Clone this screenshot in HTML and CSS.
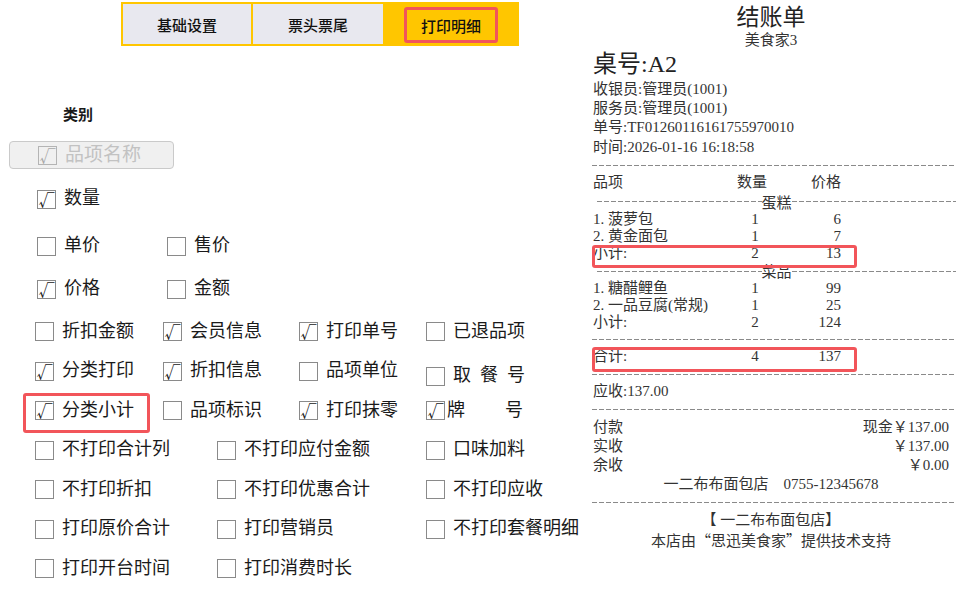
FILE: index.html
```html
<!DOCTYPE html>
<html lang="zh-CN">
<head>
<meta charset="UTF-8" />
<title>打印明细</title>
<link rel="stylesheet" href="styles.css">
</head>
<body>

<div class="page">
  <div class="settings">
    <div class="tabs">
      <div class="tab tab-1">基础设置</div>
      <div class="tab tab-2">票头票尾</div>
      <div class="tab tab-active"><span class="tab-mark">打印明细</span></div>
    </div>

    <div class="cat-title">类别</div>

    <div class="name-btn">
      <span class="cb on">√</span>
      <span>品项名称</span>
    </div>

    <div class="row row-a">
      <label class="opt"><span class="cb on">√</span>数量</label>
    </div>
    <div class="row row-b">
      <label class="opt"><span class="cb"></span>单价</label>
      <label class="opt"><span class="cb"></span>售价</label>
    </div>
    <div class="row row-c">
      <label class="opt"><span class="cb on">√</span>价格</label>
      <label class="opt"><span class="cb"></span>金额</label>
    </div>

    <div class="grid grid-4">
      <label class="opt"><span class="cb"></span>折扣金额</label>
      <label class="opt"><span class="cb on">√</span>会员信息</label>
      <label class="opt"><span class="cb on">√</span>打印单号</label>
      <label class="opt"><span class="cb"></span>已退品项</label>

      <label class="opt"><span class="cb on">√</span>分类打印</label>
      <label class="opt"><span class="cb on">√</span>折扣信息</label>
      <label class="opt"><span class="cb"></span>品项单位</label>
      <label class="opt opt-low"><span class="cb"></span>取&ensp;餐&ensp;号</label>

      <label class="opt opt-mark"><span class="cb on">√</span>分类小计</label>
      <label class="opt"><span class="cb"></span>品项标识</label>
      <label class="opt"><span class="cb on">√</span>打印抹零</label>
      <label class="opt opt-tight"><span class="cb on">√</span>牌&emsp;&emsp;&nbsp;号</label>
    </div>

    <div class="grid grid-3">
      <label class="opt"><span class="cb"></span>不打印合计列</label>
      <label class="opt"><span class="cb"></span>不打印应付金额</label>
      <label class="opt"><span class="cb"></span>口味加料</label>

      <label class="opt"><span class="cb"></span>不打印折扣</label>
      <label class="opt"><span class="cb"></span>不打印优惠合计</label>
      <label class="opt"><span class="cb"></span>不打印应收</label>

      <label class="opt"><span class="cb"></span>打印原价合计</label>
      <label class="opt"><span class="cb"></span>打印营销员</label>
      <label class="opt"><span class="cb"></span>不打印套餐明细</label>

      <label class="opt"><span class="cb"></span>打印开台时间</label>
      <label class="opt"><span class="cb"></span>打印消费时长</label>
    </div>
  </div>

  <div class="receipt">
    <div class="r-title">结账单</div>
    <div class="r-sub">美食家3</div>
    <div class="r-table">桌号:A2</div>
    <div class="r-info">收银员:管理员(1001)</div>
    <div class="r-info">服务员:管理员(1001)</div>
    <div class="r-info">单号:TF01260116161755970010</div>
    <div class="r-info">时间:2026-01-16 16:18:58</div>
    <div class="dash h16"></div>

    <div class="r-grid r-head"><span>品项</span><span>数量</span><span>价格</span></div>
    <div class="r-sect h19"><span>蛋糕</span></div>
    <div class="r-grid"><span>1. 菠萝包</span><span>1</span><span>6</span></div>
    <div class="r-grid"><span>2. 黄金面包</span><span>1</span><span>7</span></div>
    <div class="r-grid r-mark"><span>小计:</span><span>2</span><span>13</span></div>
    <div class="r-sect h18"><span>菜品</span></div>
    <div class="r-grid"><span>1. 糖醋鲤鱼</span><span>1</span><span>99</span></div>
    <div class="r-grid"><span>2. 一品豆腐(常规)</span><span>1</span><span>25</span></div>
    <div class="r-grid"><span>小计:</span><span>2</span><span>124</span></div>
    <div class="dash h16"></div>
    <div class="r-grid r-total r-mark"><span>合计:</span><span>4</span><span>137</span></div>
    <div class="dash h16"></div>
    <div class="r-line">应收:137.00</div>
    <div class="dash h17"></div>

    <div class="r-line r-pay"><span>付款</span><span>现金￥137.00</span></div>
    <div class="r-line r-pay"><span>实收</span><span>￥137.00</span></div>
    <div class="r-line r-pay"><span>余收</span><span>￥0.00</span></div>
    <div class="r-line r-center">一二布布面包店　0755-12345678</div>
    <div class="dash h17"></div>
    <div class="r-line r-center">【 一二布布面包店】</div>
    <div class="r-line r-center r-cjk">本店由“思迅美食家”提供技术支持</div>
  </div>
</div>

</body>
</html>
```

FILE: styles.css
```css
* {
  box-sizing: border-box;
}

body {
  margin: 0;
  background: #fff;
  color: #1a1a1a;
  font-family: "Noto Sans CJK SC", sans-serif;
}

.page {
  display: flex;
  width: 964px;
  height: 600px;
  overflow: hidden;
}

.settings {
  width: 592px;
  flex: none;
}

/* tabs */
.tabs {
  display: flex;
  gap: 2px;
  width: 398px;
  height: 44px;
  margin: 2px 0 0 121px;
  padding: 2px;
  background: #ffc600;
}

.tab {
  display: flex;
  align-items: center;
  justify-content: center;
  font-size: 15px;
  font-weight: 500;
  color: #111;
  background: #e8e8ef;
}

.tab-1 {
  width: 128px;
}

.tab-2 {
  width: 130px;
}

.tab-active {
  flex: 1;
  background: #ffc600;
}

.tab-mark {
  display: flex;
  align-items: center;
  justify-content: center;
  width: 94px;
  height: 36px;
  margin-top: 2px;
  border: 3px solid #f2555a;
  border-radius: 3px;
}

.cat-title {
  height: 36px;
  margin-top: 50px;
  padding-left: 63px;
  line-height: 36px;
  font-size: 15px;
  font-weight: 700;
}

.name-btn {
  display: flex;
  align-items: center;
  gap: 8px;
  width: 165px;
  height: 28px;
  margin: 9px 0 0 9px;
  padding: 0 0 6px 28px;
  border: 1px solid #cacaca;
  border-radius: 4px;
  background: #f0f0f0;
  color: #c2c2c2;
  font-size: 19px;
}

.name-btn .cb {
  border-color: #b4b4b4;
  color: #a8a8a8;
  background: transparent;
}

/* checkbox options */
.cb {
  display: flex;
  align-items: flex-end;
  justify-content: center;
  flex: none;
  width: 19px;
  height: 19px;
  margin-top: 6px;
  border: 1px solid #8a8a8a;
  background: #fff;
  color: #222;
  font-size: 16px;
  line-height: 17px;
}

.opt {
  display: flex;
  align-items: center;
  gap: 8px;
  font-size: 18px;
  color: #1a1a1a;
  white-space: nowrap;
}

.row {
  display: grid;
  grid-template-columns: 130px auto;
  align-items: center;
  height: 40px;
  padding-left: 37px;
}

.row-a {
  margin-top: 7px;
}

.row-b {
  margin-top: 7px;
}

.row-c {
  margin-top: 3px;
}

.grid {
  display: grid;
  grid-auto-rows: 39.5px;
  padding-left: 35px;
}

.grid-4 {
  margin-top: 3px;
  grid-template-columns: 128px 136px 127px auto;
}

.grid-3 {
  grid-template-columns: 182px 209px auto;
}

.opt-low {
  padding-top: 10px;
}

.opt-tight {
  gap: 2px;
}

.opt-mark {
  position: relative;
}

.opt-mark::after {
  content: "";
  position: absolute;
  left: -12px;
  top: 5px;
  width: 121px;
  height: 34px;
  border: 3px solid #f2555a;
  border-radius: 3px;
}

/* receipt */
.receipt {
  width: 364px;
  flex: none;
  padding: 0 7px 0 1px;
  font-family: "Liberation Serif", "Noto Sans CJK SC", serif;
  font-size: 15px;
  color: #333;
}

.r-title {
  height: 30px;
  padding-top: 1px;
  line-height: 29px;
  text-align: center;
  font-family: "Noto Sans CJK SC", sans-serif;
  font-size: 23px;
  color: #222;
}

.r-sub {
  height: 20px;
  line-height: 20px;
  text-align: center;
}

.r-table {
  height: 29.5px;
  line-height: 29.5px;
  font-size: 24px;
  color: #222;
}

.r-info {
  height: 19.4px;
  line-height: 19.4px;
}

.dash {
  margin: 0 -7px 0 -1px;
  background: repeating-linear-gradient(90deg, #8a8a8a 0 5px, transparent 5px 7px) center / 100% 1px no-repeat;
}

.h16 {
  height: 16px;
}

.h17 {
  height: 17px;
}

.h18 {
  height: 18px;
}

.h19 {
  height: 19px;
}

.r-sect {
  display: flex;
  align-items: center;
  margin: 0 -7px 0 -1px;
  padding-left: 5px;
}

.r-sect::before,
.r-sect::after {
  content: "";
  flex: 1;
  height: 1px;
  background: repeating-linear-gradient(90deg, #8a8a8a 0 5px, transparent 5px 7px);
}

.r-sect span {
  font-family: "Noto Sans CJK SC", sans-serif;
  line-height: 18px;
}

.r-grid {
  display: grid;
  grid-template-columns: 144px 36px 68px;
  height: 17px;
  line-height: 17px;
  white-space: nowrap;
}

.r-grid span:nth-child(2) {
  text-align: center;
}

.r-grid span:nth-child(3) {
  text-align: right;
}

.r-head {
  height: 19px;
  line-height: 19px;
}

.r-head span:nth-child(2) {
  text-align: left;
}

.r-total {
  height: 19px;
  line-height: 19px;
}

.r-mark {
  position: relative;
}

.r-mark::after {
  content: "";
  position: absolute;
  left: -1px;
  top: 0;
  width: 259px;
  height: 100%;
  border: 3px solid #f2555a;
  border-radius: 3px;
}

.r-line {
  height: 19px;
  line-height: 19px;
  white-space: nowrap;
}

.r-pay {
  display: flex;
  justify-content: space-between;
}

.r-center {
  text-align: center;
}

.r-cjk {
  font-family: "Noto Sans CJK SC", sans-serif;
}
```
